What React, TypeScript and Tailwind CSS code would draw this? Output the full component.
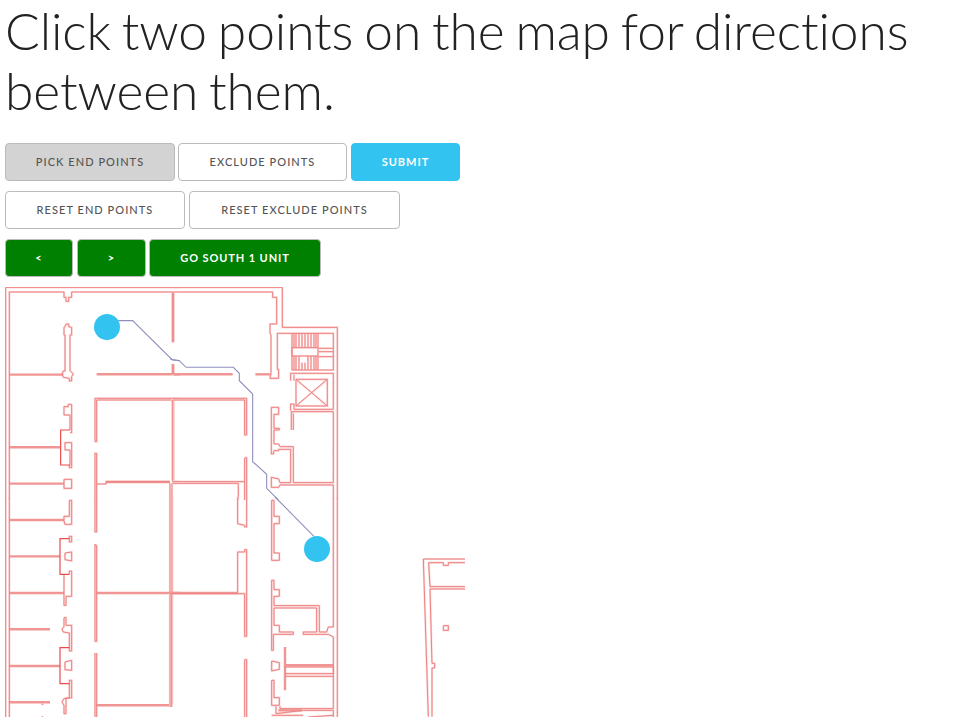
const Z2 = { o: [0, 280], thin: [
  "17,22 540,22", "28,660 28,36 192,36 192,52 198,52 198,64 206,64 206,52 215,52 215,36 540,36", "17,22 17,660",
  "198,132 206,132 206,140 215,142 215,165 210,165 210,272 220,282 215,290 215,303 208,303 208,295 190,292 186,283 190,273 195,273 195,165 192,165 192,142 195,140 198,132",
  "215,373 205,373 205,380 192,380 192,405 210,405 210,450", "210,555 210,510 195,510 195,488 215,488 215,563 208,563 208,555",
  "215,373 215,458 210,458",
  "285,485 285,355 540,355", "285,485 290,485 290,360 540,360",
  "285,660 285,520 290,520 290,612 318,612 318,605 510,605",
  "192,598 215,598 215,625 192,625 192,598", "517,36 517,185 521,185 521,36", "517,252 517,281 521,281 521,252", "517,360 517,600", "521,360 521,600", "510,610 510,660", "516,610 516,660", "290,612 290,660",
], thick: ["28,284 190,284", "290,283 517,283", "522,283 540,283", "28,502 180,502", "28,611 192,611", "318,606 510,606", "517,606 540,606"], strong: ["210,450 182,450 182,555 210,555"] };

const Z3 = { o: [170, 280], thin: [
  "0,22 337,22 337,142 502,142 502,660", "8,36 308,36 308,52 320,52 320,132 300,132 300,160 303,165 303,280 300,295 326,295 326,268 322,268 322,160 490,160 490,270 366,270 366,160",
  "372,160 372,203", "378,160 378,203", "387,160 387,203", "396,160 396,203", "405,160 405,203", "414,160 414,203", "423,160 423,203", "432,160 432,203", "438,160 438,203", "444,160 444,203",
  "372,228 372,270", "378,228 378,270", "387,228 387,270", "396,248 396,270", "405,248 405,270", "414,228 414,270", "423,228 423,270", "432,228 432,270", "438,228 438,270", "444,228 444,270",
  "366,203 444,203 444,228 366,228 366,203", "446,205 490,205", "446,215 490,215", "446,230 490,230",
  "362,302 362,280 490,280 490,388 372,388 372,372 362,372 362,392",
  "372,302 372,284", "378,298 472,298 472,378 378,378 378,298", "378,298 472,378", "472,298 378,378",
  "364,450 364,395 490,395 490,608 370,608 370,500 330,500 326,492 312,492 312,450 328,450 328,445 312,445 312,403 326,403 326,382 304,382 304,522 310,522 312,512 326,512 326,508 362,508 362,608 330,608 326,597 304,592 304,622 326,622 330,615 490,615 490,660",
  "370,450 370,400",
  "8,355 230,355 230,465 224,465 224,360 8,360 8,605", "230,532 224,535 224,605 8,605", "230,532 230,660", "224,605 224,660", "205,610 205,660", "8,610 205,610",
], thick: ["8,283 188,283", "256,283 300,283"], strong: [] };

const Z4 = { o: [0, 497], thin: [
  "17,0 17,660", "28,0 28,660",
  "208,10 215,10 215,82 195,82 192,72 192,58 208,58 208,10",
  "215,222 215,298 198,298 198,325 192,325 192,232", "208,125 208,135 215,135 215,118 208,118 208,125", "208,232 208,222 215,222", "195,168 215,165 215,192 195,188 195,168",
  "192,362 198,362 198,385 215,385 215,462 208,462 208,408 190,405 186,397 192,388 192,362",
  "208,560 208,550 215,550 215,603 198,603 198,650 192,650 192,625 186,615 192,605 208,603 208,560",
  "195,495 215,490 215,520 195,518 195,495",
  "285,0 285,105 290,105 290,0", "285,142 285,433 290,433 290,145 285,142", "285,468 285,660", "290,468 290,660", "510,0 510,285", "517,0 517,285", "510,290 510,622", "517,290 517,622",
  "125,622 130,622", "125,660 130,660",
], thick: ["28,69 192,69", "28,178 180,178", "28,288 192,288", "28,397 150,397", "28,507 180,507", "28,616 150,616", "290,288 510,288", "517,288 540,288", "290,625 510,625"], strong: ["208,125 180,125 180,232 208,232", "208,452 180,452 180,560 208,560"] };

const Z5 = { o: [170, 497], thin: [
  "490,0 490,390 475,390 470,405 448,405 448,326 312,326 312,298 328,298 328,278 312,278 312,250 305,250 305,460 310,460 310,412 370,412 370,405 328,405 328,385 312,385 312,333 440,333 440,405 400,405 400,412 475,412 490,420 490,635 330,635 330,628",
  "502,0 502,660", "0,0 0,285", "6,0 6,285",
  "203,0 203,80 224,85 224,90 230,90 230,0", "203,285 203,165 224,165 224,158 230,158 230,418 224,418 224,290 5,290",
  "224,488 230,488 230,660", "224,488 224,660", "0,290 0,630", "5,290 5,630",
  "305,10 312,10 312,58 328,58 328,80 312,80 312,168 328,168 328,190 305,190 305,10",
  "345,510 490,510 490,530 345,530", "345,538 490,538",
  "305,492 328,497 328,517 305,522 305,492", "305,550 312,550 312,602 328,602 328,625 305,625 305,550",
  "318,628 318,650 400,640 490,640 490,660", "305,655 400,655", "415,660 490,655",
], thick: ["0,288 205,288", "345,450 345,580", "345,505 490,505", "325,640 395,640"], strong: [] };

const Z6 = { o: [400, 540], thin: [
  "70,57 85,530", "70,57 195,57", "86,68 130,68 130,76 145,76 145,68 195,68", "86,68 90,140 195,140", "90,147 195,147", "90,147 96,370 104,370 104,384 96,384 96,530",
  "130,257 145,257 145,271 130,271 130,257",
], thick: [], strong: [] };

const ROUTE = [
  { o: [0, 280], pts: "355,122 398,122 517,240 540,242" },
  { o: [170, 280], pts: "0,237 28,242 48,262 190,262 208,280 208,302 248,342 248,545 290,583 290,625 325,660" },
  { o: [170, 497], pts: "315,0 432,118" },
];

function FloorMap() {
  const groups = [Z2, Z3, Z4, Z5, Z6];
  return (
    <svg width="460" height="430" viewBox="5 287 460 430" className="block">
      {groups.map((g, i) => (
        <g key={i} transform={`translate(${g.o[0]} ${g.o[1]}) scale(0.3333)`} fill="none">
          {g.thin.map((p, j) => (
            <polyline key={j} points={p} stroke="#fbdcdc" strokeWidth="2.2" vectorEffect="non-scaling-stroke" />
          ))}
          {g.thick.map((p, j) => (
            <polyline key={j} points={p} stroke="#f09494" strokeWidth="2.4" vectorEffect="non-scaling-stroke" />
          ))}
          {g.thin.map((p, j) => (
            <polyline key={j} points={p} stroke="#ee8080" strokeWidth="1" vectorEffect="non-scaling-stroke" />
          ))}
          {g.strong.map((p, j) => (
            <polyline key={j} points={p} stroke="#ee4a4a" strokeWidth="1.2" vectorEffect="non-scaling-stroke" />
          ))}
        </g>
      ))}
      {ROUTE.map((r, i) => (
        <g key={i} transform={`translate(${r.o[0]} ${r.o[1]}) scale(0.3333)`} fill="none">
          <polyline points={r.pts} stroke="#9090c0" strokeWidth="1.1" vectorEffect="non-scaling-stroke" />
        </g>
      ))}
      <circle cx="107" cy="327" r="13" fill="#33c3f0" />
      <circle cx="317" cy="549" r="13" fill="#33c3f0" />
    </svg>
  );
}

const btn = "h-[38px] rounded-[4px] border text-[11px] uppercase flex items-center justify-center whitespace-nowrap";
const outline = "border-[#bbbbbb] text-[#555555] font-medium tracking-[1.05px]";
const green = "bg-[#008000] border-[#bbbbbb] text-white font-bold tracking-[0.9px]";

export default function App() {
  return (
    <div className="h-[717px] overflow-hidden bg-white pl-[5px] font-['Lato',sans-serif]">
      <h1 className="text-[51.5px] leading-[60px] font-light tracking-[-0.1px] [word-spacing:-3px] text-[#222222] mb-[23px]">
        Click two points on the map for directions between them.
      </h1>
      <div className="flex mb-[10px]">
        <div className={`${btn} ${outline} w-[170px] bg-[#d3d3d3]`}>Pick End Points</div>
        <div className={`${btn} ${outline} w-[169px] ml-[3px]`}>Exclude Points</div>
        <div className={`${btn} w-[109px] ml-[4px] bg-[#33c3f0] border-[#33c3f0] text-white font-bold tracking-[1px]`}>Submit</div>
      </div>
      <div className="flex mb-[10px]">
        <div className={`${btn} ${outline} w-[180px]`}>Reset End Points</div>
        <div className={`${btn} ${outline} w-[211px] ml-[4px]`}>Reset Exclude Points</div>
      </div>
      <div className="flex mb-[10px]">
        <div className={`${btn} ${green} w-[68px]`}>&lt;</div>
        <div className={`${btn} ${green} w-[69px] ml-[4px]`}>&gt;</div>
        <div className={`${btn} ${green} w-[172px] ml-[3px]`}>Go South 1 Unit</div>
      </div>
      <FloorMap />
    </div>
  );
}
